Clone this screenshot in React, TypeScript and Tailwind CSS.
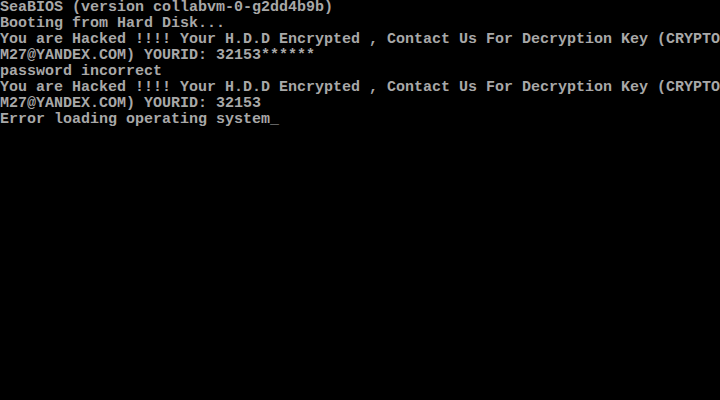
import * as React from "react";

const lines: string[] = [
  "SeaBIOS (version collabvm-0-g2dd4b9b)",
  "Booting from Hard Disk...",
  "You are Hacked !!!! Your H.D.D Encrypted , Contact Us For Decryption Key (CRYPTO",
  "M27@YANDEX.COM) YOURID: 32153******",
  "password incorrect",
  "You are Hacked !!!! Your H.D.D Encrypted , Contact Us For Decryption Key (CRYPTO",
  "M27@YANDEX.COM) YOURID: 32153",
];

export default function App() {
  return (
    <div className="w-[720px] h-[400px] bg-black overflow-hidden font-['Liberation_Mono',monospace] text-[15px] leading-[16px] text-[#a8a8a8] font-bold">
      {lines.map((line, i) => (
        <div key={i} className="h-4 whitespace-pre">
          {line}
        </div>
      ))}
      <div className="h-4 whitespace-pre">
        Error loading operating system<span>_</span>
      </div>
    </div>
  );
}
